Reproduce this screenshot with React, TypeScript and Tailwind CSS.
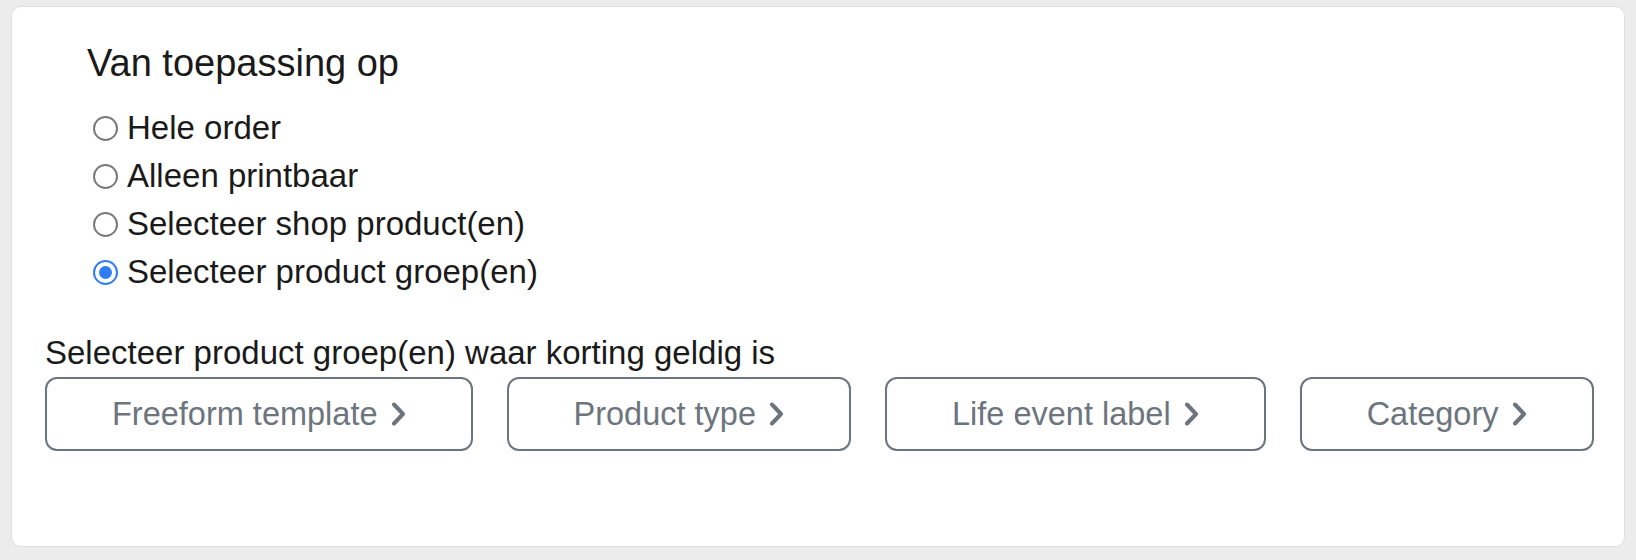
import React, { useState } from 'react';

const OPTIONS = [
  'Hele order',
  'Alleen printbaar',
  'Selecteer shop product(en)',
  'Selecteer product groep(en)',
];

const GROUPS = ['Freeform template', 'Product type', 'Life event label', 'Category'];

function Chevron() {
  return (
    <svg width="15" height="24" viewBox="0 0 15 24" className="ml-[13px] shrink-0">
      <polyline
        points="3,2.5 12,12 3,21.5"
        fill="none"
        stroke="currentColor"
        strokeWidth="4"
        strokeLinecap="round"
        strokeLinejoin="round"
      />
    </svg>
  );
}

function Radio({ checked }: { checked: boolean }) {
  if (checked) {
    return (
      <span className="w-[25px] h-[25px] rounded-full border-[2.5px] border-[#2f7cf6] bg-white flex items-center justify-center shrink-0">
        <span className="w-[13px] h-[13px] rounded-full bg-[#2f7cf6]" />
      </span>
    );
  }
  return <span className="w-[25px] h-[25px] rounded-full border-2 border-[#7a7a7a] bg-white shrink-0" />;
}

export default function App() {
  const [selected, setSelected] = useState(3);

  return (
    <div
      className="h-[560px] bg-[#ececec] pt-[6px] px-[11px] text-[#1a1a1a]"
      style={{ fontFamily: '"Liberation Sans", Arial, Helvetica, sans-serif' }}
    >
      <div className="h-[541px] bg-white rounded-[10px] border border-[#e0e0e0] pl-[33px] pt-[34px]">
        {/* Applies to */}
        <h3 className="ml-[42px] text-[38px] leading-[44px] font-normal">Van toepassing op</h3>

        <div className="ml-[48px] mt-[19px] flex flex-col">
          {OPTIONS.map((label, i) => (
            <label
              key={label}
              onClick={() => setSelected(i)}
              className="flex items-center gap-[9px] text-[33px] leading-[48px] cursor-pointer"
            >
              <Radio checked={selected === i} />
              <span>{label}</span>
            </label>
          ))}
        </div>

        {/* Product groups */}
        <p className="mt-[33px] text-[33px] leading-[48px]">
          Selecteer product groep(en) waar korting geldig is
        </p>
        <div className="flex gap-[34px]">
          {GROUPS.map((g) => (
            <button
              key={g}
              className="flex items-center border-2 border-[#6c757d] rounded-[12px] px-[65px] py-[11px] text-[32.5px] leading-[48px] text-[#6c757d] bg-white"
            >
              {g}
              <Chevron />
            </button>
          ))}
        </div>
      </div>
    </div>
  );
}
